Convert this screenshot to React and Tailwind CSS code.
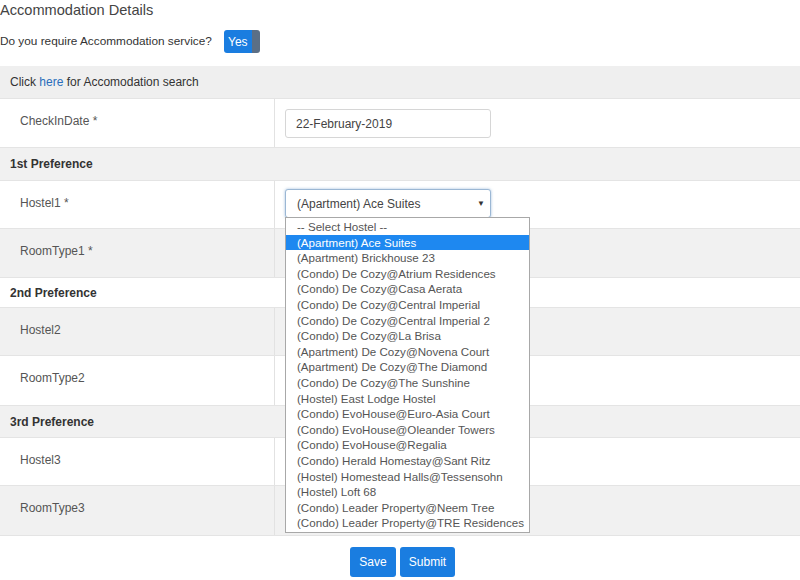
import React from 'react';

const hostels = [
  '-- Select Hostel --',
  '(Apartment) Ace Suites',
  '(Apartment) Brickhouse 23',
  '(Condo) De Cozy@Atrium Residences',
  '(Condo) De Cozy@Casa Aerata',
  '(Condo) De Cozy@Central Imperial',
  '(Condo) De Cozy@Central Imperial 2',
  '(Condo) De Cozy@La Brisa',
  '(Apartment) De Cozy@Novena Court',
  '(Apartment) De Cozy@The Diamond',
  '(Condo) De Cozy@The Sunshine',
  '(Hostel) East Lodge Hostel',
  '(Condo) EvoHouse@Euro-Asia Court',
  '(Condo) EvoHouse@Oleander Towers',
  '(Condo) EvoHouse@Regalia',
  '(Condo) Herald Homestay@Sant Ritz',
  '(Hostel) Homestead Halls@Tessensohn',
  '(Hostel) Loft 68',
  '(Condo) Leader Property@Neem Tree',
  '(Condo) Leader Property@TRE Residences',
];

function FieldRow({ label, gray, height, children }) {
  return (
    <div className={`flex border-t border-[#e4e4e4] ${gray ? 'bg-[#f1f1f1]' : 'bg-white'} ${height}`}>
      <div className="w-[275px] border-r border-[#e2e2e2] pl-5 pt-[13px] text-[12px] text-[#555]">{label}</div>
      <div className="flex-1 pl-[10px] pt-[10px]">{children}</div>
    </div>
  );
}

function PrefRow({ label, gray, height }) {
  return (
    <div className={`flex items-center border-t border-[#e4e4e4] pl-[10px] text-[12px] font-bold text-[#333] ${gray ? 'bg-[#f1f1f1]' : 'bg-white'} ${height}`}>
      {label}
    </div>
  );
}

export default function App() {
  return (
    <div className="relative h-[580px] w-[800px] overflow-hidden bg-white font-['Liberation_Sans',Arial,sans-serif]">
      <div className="h-[20px] text-[14.6px] leading-[20px] text-[#444]">Accommodation Details</div>
      <div className="mt-[10px] flex h-[23px] items-center">
        <span className="text-[11.8px] text-[#333]">Do you require Accommodation service?</span>
        <div className="ml-[12px] flex h-[23px] w-[36px] overflow-hidden rounded-[3px]">
          <div className="flex flex-1 items-center justify-center bg-[#1a7de0] text-[12px] text-white">Yes</div>
          <div className="w-[8px] bg-[#5b6f86]" />
        </div>
      </div>

      <div className="mt-[13px] flex h-[32px] items-center bg-[#efefef] pl-[10px] text-[12px] text-[#333]">
        Click&nbsp;<span className="text-[#2a6ebb]">here</span>&nbsp;for Accomodation search
      </div>

      <FieldRow label="CheckInDate *" height="h-[49px]">
        <div className="flex h-[29px] w-[206px] items-center rounded-[3px] border border-[#d6d6d6] bg-white pl-[10px] text-[12px] text-[#444]">
          22-February-2019
        </div>
      </FieldRow>
      <PrefRow label="1st Preference" gray height="h-[33px]" />
      <FieldRow label="Hostel1 *" height="h-[48px]">
        <div className="-mt-[2px] flex h-[29px] w-[206px] items-center justify-between rounded-[3px] border border-[#9bb7d4] bg-white pl-[11px] pr-[5px] text-[12px] text-[#444] shadow-[0_0_3px_rgba(102,150,200,0.6)]">
          <span>(Apartment) Ace Suites</span>
          <span className="text-[8px] text-[#333]">▼</span>
        </div>
      </FieldRow>
      <FieldRow label="RoomType1 *" gray height="h-[49px]" />
      <PrefRow label="2nd Preference" height="h-[30px]" />
      <FieldRow label="Hostel2" gray height="h-[48px]" />
      <FieldRow label="RoomType2" height="h-[50px]" />
      <PrefRow label="3rd Preference" gray height="h-[32px]" />
      <FieldRow label="Hostel3" height="h-[48px]" />
      <FieldRow label="RoomType3" gray height="h-[50px]" />
      <div className="border-t border-[#e4e4e4]" />

      <div className="mt-[11px] flex justify-center gap-[4px] pl-[5px]">
        <button className="h-[30px] w-[46px] rounded-[3px] bg-[#1a7de0] text-[12px] text-white">Save</button>
        <button className="h-[30px] w-[55px] rounded-[3px] bg-[#1a7de0] text-[12px] text-white">Submit</button>
      </div>

      <div className="absolute left-[285px] top-[217px] w-[245px] border border-[#a8a8a8] bg-white py-[1px]">
        {hostels.map((h, i) => (
          <div
            key={h}
            className={`h-[15.6px] whitespace-nowrap pl-[11px] text-[11.6px] leading-[15.6px] ${i === 1 ? 'bg-[#1e88f0] text-white' : 'text-[#555]'}`}
          >
            {h}
          </div>
        ))}
      </div>
    </div>
  );
}
